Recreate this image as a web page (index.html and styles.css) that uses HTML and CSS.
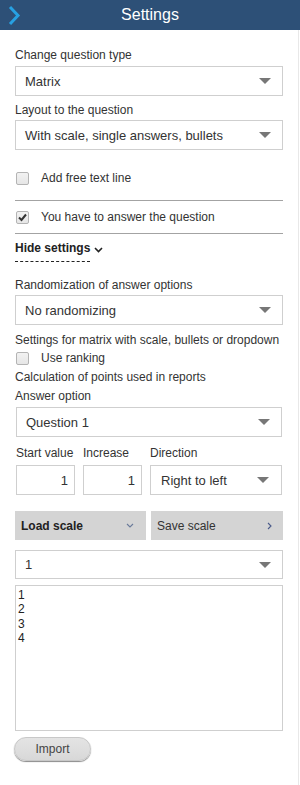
FILE: index.html
```html
<!DOCTYPE html>
<html lang="en">
<head>
<meta charset="utf-8">
<title>Settings</title>
<link rel="stylesheet" href="styles.css">
</head>
<body>
<header class="topbar">
  <svg class="back" width="14" height="22" viewBox="0 0 14 22" aria-hidden="true"><polyline points="3,2 11,10.5 3,19" fill="none" stroke="#27a1e2" stroke-width="3"/></svg>
  <h1 class="title">Settings</h1>
  <span></span>
</header>
<main class="panel">
  <div class="lbl lbl-first">Change question type</div>
  <div class="select"><span>Matrix</span><i class="caret"></i></div>

  <div class="lbl">Layout to the question</div>
  <div class="select"><span>With scale, single answers, bullets</span><i class="caret"></i></div>

  <div class="checkrow checkrow-first"><span class="box"></span><span>Add free text line</span></div>
  <div class="checkrow"><span class="box"><svg width="11" height="11" viewBox="0 0 11 11"><path d="M2 5.5 L4.5 8 L9 2.5" fill="none" stroke="#333" stroke-width="2"/></svg></span><span>You have to answer the question</span></div>

  <div class="toggle"><span class="toggle-text">Hide settings</span><svg width="9" height="6" viewBox="0 0 9 6"><polyline points="1,1 4.5,4.5 8,1" fill="none" stroke="#222" stroke-width="1.6"/></svg></div>

  <div class="lbl lbl-rand">Randomization of answer options</div>
  <div class="select"><span>No randomizing</span><i class="caret"></i></div>

  <div class="line line-matrix">Settings for matrix with scale, bullets or dropdown</div>
  <div class="rankrow"><span class="box"></span><span>Use ranking</span></div>
  <div class="line line-calc">Calculation of points used in reports</div>
  <div class="lbl lbl-answer">Answer option</div>
  <div class="select select-inset"><span>Question 1</span><i class="caret"></i></div>

  <div class="scalegrid">
    <div class="glbl">Start value</div>
    <div class="glbl">Increase</div>
    <div class="glbl">Direction</div>
    <div class="num">1</div>
    <div class="num">1</div>
    <div class="select select-grid"><span>Right to left</span><i class="caret"></i></div>
  </div>

  <div class="btnrow">
    <div class="gbtn gbtn-load"><span>Load scale</span><svg width="8" height="5" viewBox="0 0 8 5"><polyline points="1,1 4,4 7,1" fill="none" stroke="#6a7a9a" stroke-width="1.1"/></svg></div>
    <div class="gbtn"><span>Save scale</span><svg width="5" height="8" viewBox="0 0 5 8"><polyline points="1,1 4,4 1,7" fill="none" stroke="#4a5a8a" stroke-width="1.1"/></svg></div>
  </div>

  <div class="select select-scale"><span>1</span><i class="caret"></i></div>

  <div class="textarea">1<br>2<br>3<br>4</div>

  <div class="import">Import</div>
</main>
</body>
</html>
```

FILE: styles.css
```css
html, body {
  margin: 0;
  padding: 0;
  background: #fff;
}
body {
  font-family: "Liberation Sans", Arial, sans-serif;
  font-size: 12px;
  color: #333;
  width: 300px;
}
.topbar {
  height: 30px;
  background: #2d5077;
  display: grid;
  grid-template-columns: 1fr auto 1fr;
  align-items: center;
}
.back {
  margin-left: 7px;
  margin-top: 1px;
}
.title {
  margin: 0;
  font-size: 16px;
  font-weight: normal;
  color: #fff;
  line-height: 30px;
}
.panel {
  box-sizing: border-box;
  width: 299px;
  min-height: 755px;
  padding: 17px 15px 20px;
  border-right: 1px solid #e8e8e8;
}
.lbl {
  line-height: 16px;
  margin-top: 6px;
  margin-bottom: 2px;
}
.lbl-first {
  margin-top: 0;
  margin-bottom: 3px;
}
.select {
  box-sizing: border-box;
  height: 30px;
  border: 1px solid #cfcfcf;
  background: #fff;
  display: flex;
  align-items: center;
  justify-content: space-between;
  padding: 0 11px 0 9px;
  font-size: 13px;
}
.caret {
  width: 0;
  height: 0;
  border-left: 6px solid transparent;
  border-right: 6px solid transparent;
  border-top: 6px solid #777;
}
.checkrow {
  display: flex;
  align-items: center;
  height: 16px;
  padding: 8px 0;
  border-bottom: 1px solid #a3a3a3;
}
.checkrow-first {
  margin-top: 12px;
  padding-bottom: 14px;
}
.box {
  box-sizing: border-box;
  width: 13px;
  height: 13px;
  margin-left: 1px;
  margin-right: 12px;
  border: 1px solid #b4b4b4;
  border-radius: 2px;
  background: linear-gradient(#f2f2f2, #e6e6e6);
  display: flex;
  align-items: center;
  justify-content: center;
}
.toggle {
  margin-top: 6px;
  display: flex;
  align-items: flex-start;
  gap: 4px;
}
.toggle svg {
  margin-top: 7px;
}
.toggle-text {
  display: inline-block;
  font-weight: bold;
  line-height: 16px;
  padding-bottom: 5px;
  border-bottom: 1px dashed #222;
  color: #222;
}
.lbl-rand {
  margin-top: 15px;
}
.line {
  line-height: 16px;
}
.line-matrix {
  margin-top: 7px;
}
.rankrow {
  display: flex;
  align-items: center;
  height: 16px;
  margin-top: 2px;
}
.rankrow .box {
  margin-right: 12px;
}
.line-calc {
  margin-top: 3px;
}
.lbl-answer {
  margin-top: 3px;
  margin-bottom: 3px;
}
.select-inset {
  margin: 0 1px;
}
.scalegrid {
  margin: 8px 1px 0;
  display: grid;
  grid-template-columns: 59px 59px 1fr;
  column-gap: 8px;
  row-gap: 4px;
}
.glbl {
  line-height: 16px;
  white-space: nowrap;
}
.num {
  box-sizing: border-box;
  height: 30px;
  border: 1px solid #cfcfcf;
  display: flex;
  align-items: center;
  justify-content: flex-end;
  padding-right: 6px;
  font-size: 13px;
}
.select-grid {
  padding-left: 10px;
  padding-right: 12px;
}
.btnrow {
  margin-top: 16px;
  display: grid;
  grid-template-columns: 131px 132px;
  column-gap: 5px;
}
.gbtn {
  height: 29px;
  background: #d4d4d4;
  display: flex;
  align-items: center;
  justify-content: space-between;
  padding: 0 11px 0 6px;
}
.gbtn-load {
  font-weight: bold;
  color: #222;
  padding-right: 12px;
}
.select-scale {
  margin-top: 10px;
  height: 29px;
}
.textarea {
  box-sizing: border-box;
  margin-top: 6px;
  height: 146px;
  border: 1px solid #cfcfcf;
  padding: 2px 2px;
  line-height: 14.3px;
  color: #222;
}
.import {
  box-sizing: border-box;
  margin: 6px 0 0 -1px;
  width: 77px;
  height: 24px;
  border-radius: 12px;
  background: linear-gradient(#e4e4e4, #d8d8d8);
  border: 1px solid #c8c8c8;
  box-shadow: 0 1px 1px #8a8a8a;
  display: flex;
  align-items: center;
  justify-content: center;
  color: #444;
}
```
